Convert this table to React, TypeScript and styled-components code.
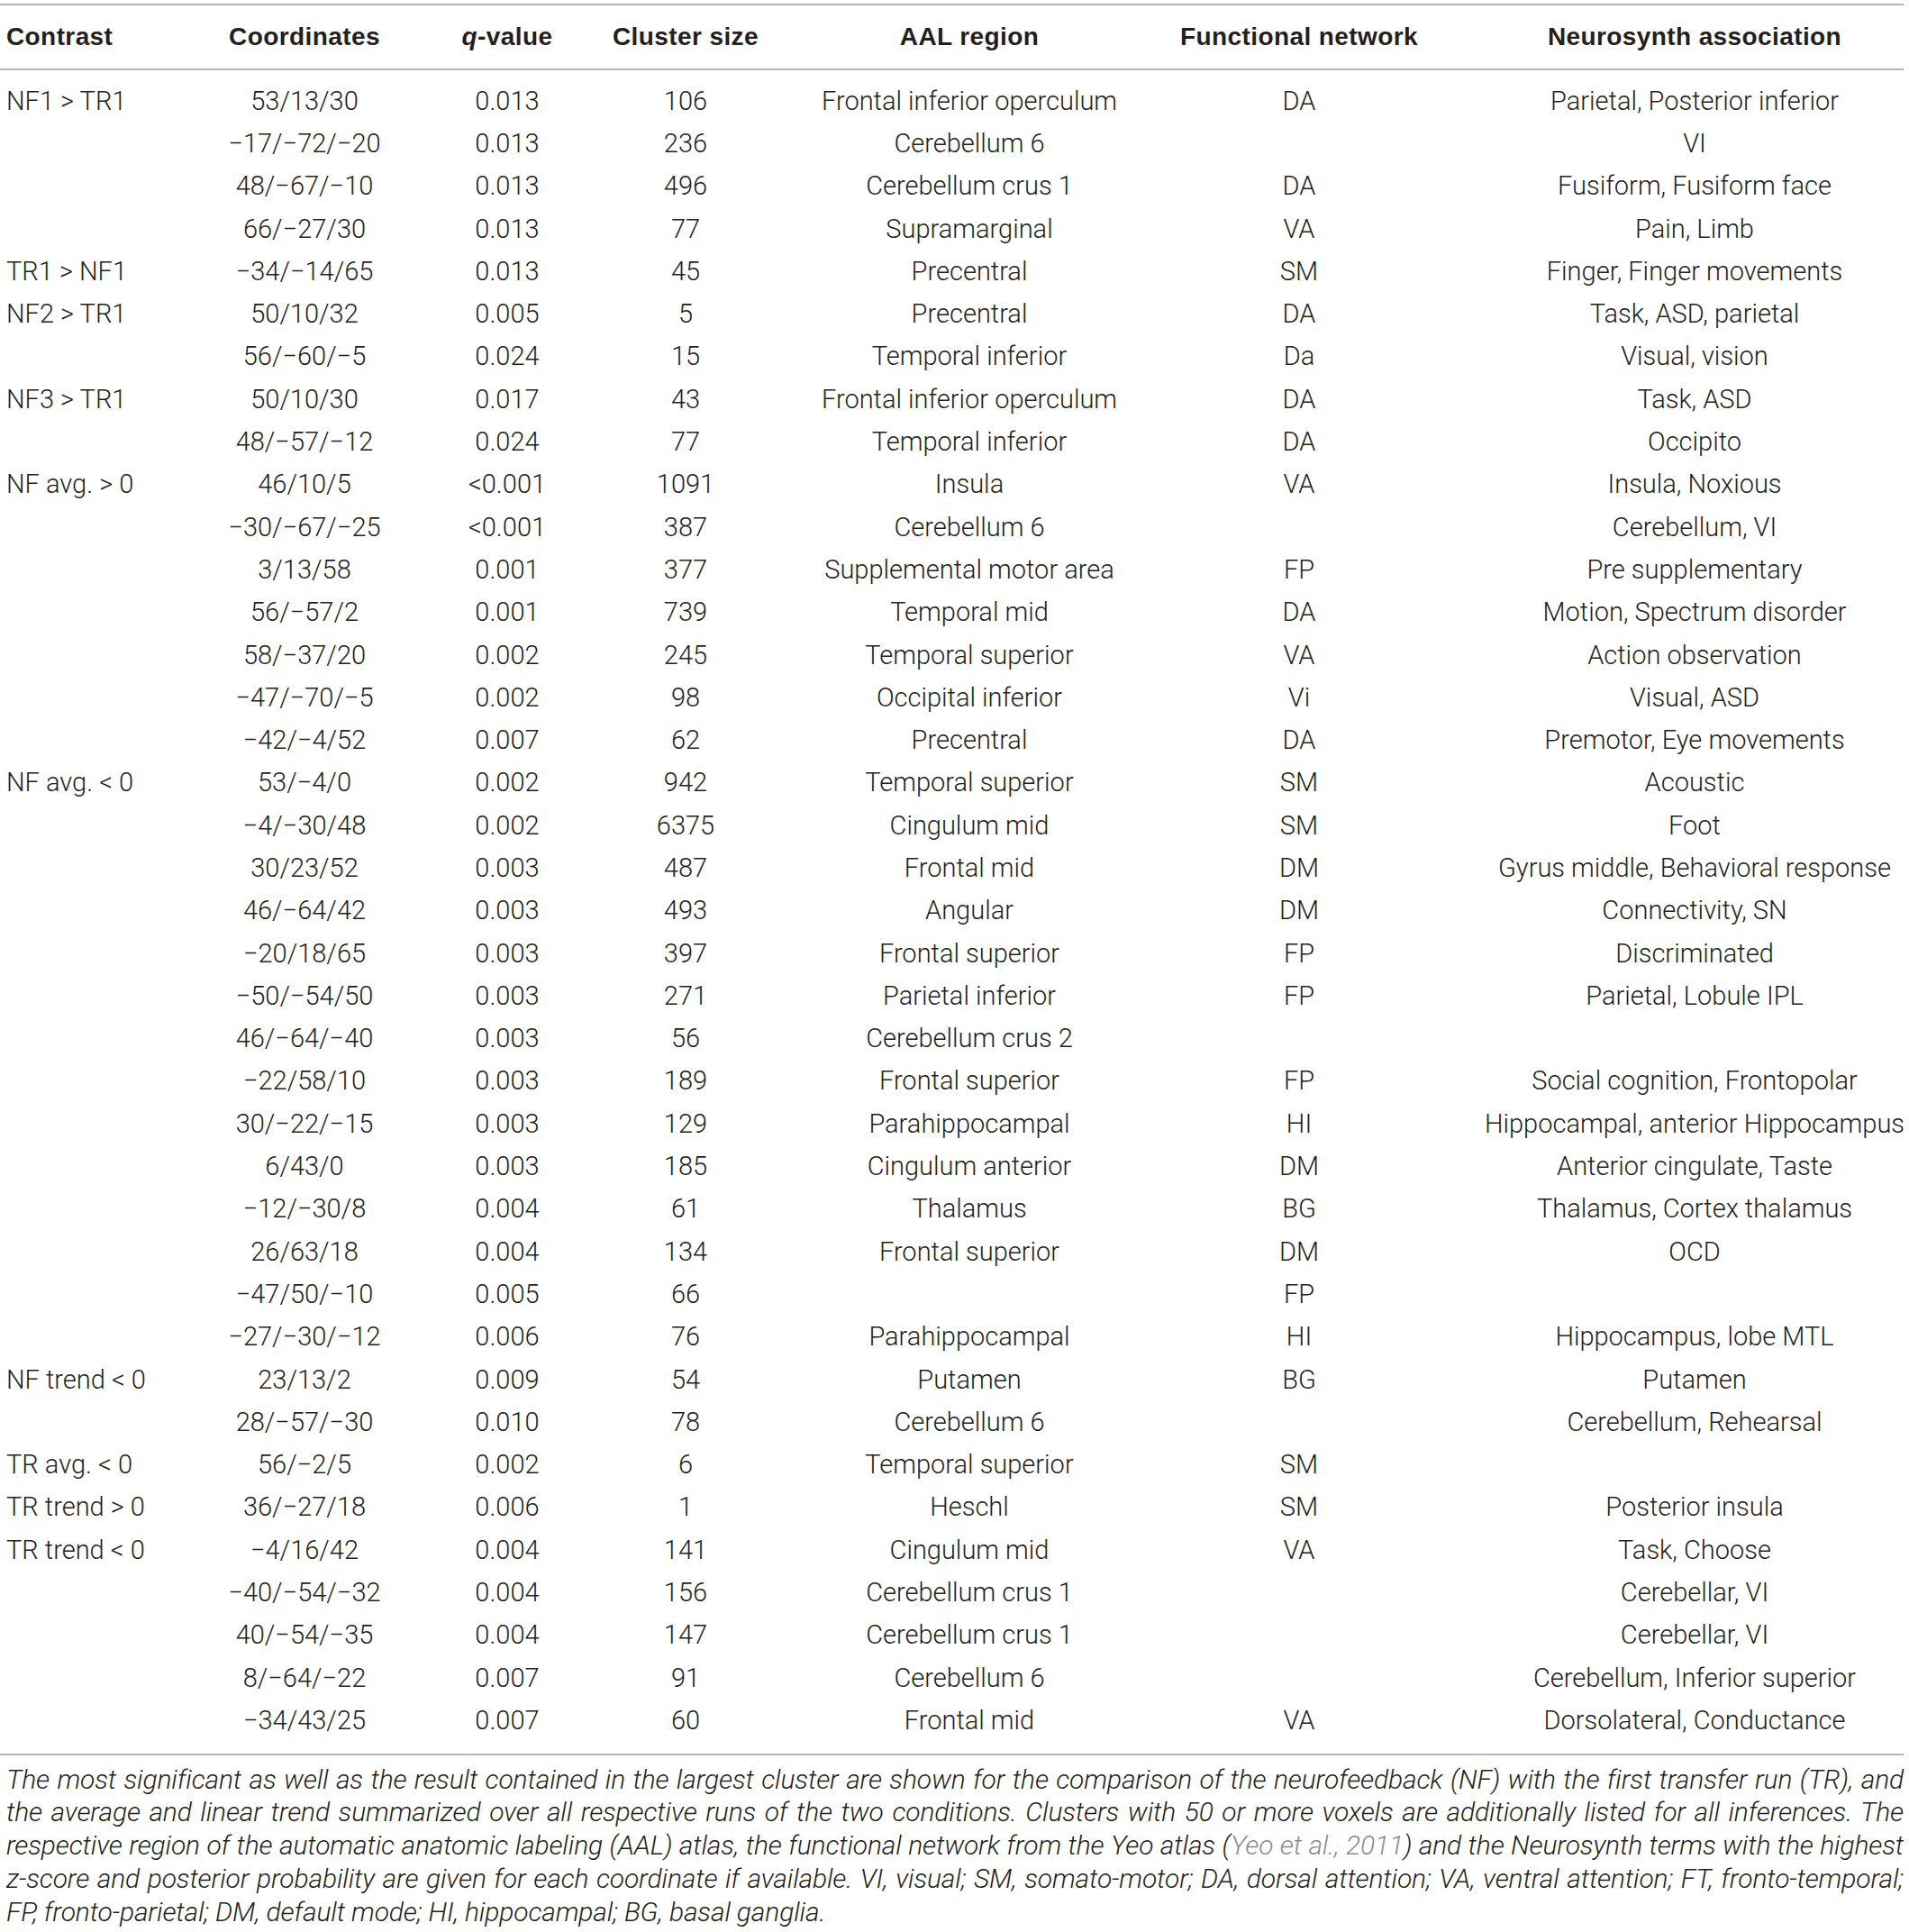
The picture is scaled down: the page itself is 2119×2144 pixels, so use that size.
import React from "react";
import styled, { createGlobalStyle } from "styled-components";

const Global = createGlobalStyle`
  html, body { margin: 0; padding: 0; background: #ffffff; }
  body { font-family: Roboto, "Liberation Sans", Arial, sans-serif; color: #231f20; }
`;

const COLS = "155px 366px 84px 312px 318px 414px 464px";

const Page = styled.div`
  width: 2113px;
  padding-top: 4px;
`;

const Table = styled.div`
  border-top: 2px solid #b4b4b4;
  border-bottom: 2px solid #b4b4b4;
`;

const HeaderRow = styled.div`
  display: grid;
  grid-template-columns: ${COLS};
  height: 70px;
  align-items: center;
  border-bottom: 2px solid #b4b4b4;
  font-family: "Liberation Sans", Arial, sans-serif;
  font-weight: 700;
  font-size: 28px;
  letter-spacing: 0.4px;
`;

const Body = styled.div`
  padding: 10px 0 13px;
`;

const Row = styled.div`
  display: grid;
  grid-template-columns: ${COLS};
  height: 47.3px;
  align-items: center;
  font-weight: 300;
  font-size: 29px;
`;

const Cell = styled.div<{ $left?: boolean }>`
  display: flex;
  justify-content: ${(p) => (p.$left ? "flex-start" : "center")};
  padding-left: ${(p) => (p.$left ? "7px" : "0")};
  white-space: nowrap;
  min-width: 0;
`;

const Q = styled.i`
  font-style: italic;
`;

const Caption = styled.div`
  margin-top: 9px;
  padding-left: 7px;
  font-style: italic;
  font-weight: 300;
  font-size: 30px;
  line-height: 36.9px;
  letter-spacing: -0.15px;
`;

const CapLine = styled.span<{ $last?: boolean }>`
  display: block;
  white-space: normal;
  text-align: ${(p) => (p.$last ? "left" : "justify")};
  text-align-last: ${(p) => (p.$last ? "left" : "justify")};
`;

const Ref = styled.span`
  color: #8c8c8c;
`;

const M = "\u2212";

type R = [string, string, string, string, string, string, string];

const rows: R[] = [
  ["NF1 > TR1", "53/13/30", "0.013", "106", "Frontal inferior operculum", "DA", "Parietal, Posterior inferior"],
  ["", `${M}17/${M}72/${M}20`, "0.013", "236", "Cerebellum 6", "", "VI"],
  ["", `48/${M}67/${M}10`, "0.013", "496", "Cerebellum crus 1", "DA", "Fusiform, Fusiform face"],
  ["", `66/${M}27/30`, "0.013", "77", "Supramarginal", "VA", "Pain, Limb"],
  ["TR1 > NF1", `${M}34/${M}14/65`, "0.013", "45", "Precentral", "SM", "Finger, Finger movements"],
  ["NF2 > TR1", "50/10/32", "0.005", "5", "Precentral", "DA", "Task, ASD, parietal"],
  ["", `56/${M}60/${M}5`, "0.024", "15", "Temporal inferior", "Da", "Visual, vision"],
  ["NF3 > TR1", "50/10/30", "0.017", "43", "Frontal inferior operculum", "DA", "Task, ASD"],
  ["", `48/${M}57/${M}12`, "0.024", "77", "Temporal inferior", "DA", "Occipito"],
  ["NF avg. > 0", "46/10/5", "<0.001", "1091", "Insula", "VA", "Insula, Noxious"],
  ["", `${M}30/${M}67/${M}25`, "<0.001", "387", "Cerebellum 6", "", "Cerebellum, VI"],
  ["", "3/13/58", "0.001", "377", "Supplemental motor area", "FP", "Pre supplementary"],
  ["", `56/${M}57/2`, "0.001", "739", "Temporal mid", "DA", "Motion, Spectrum disorder"],
  ["", `58/${M}37/20`, "0.002", "245", "Temporal superior", "VA", "Action observation"],
  ["", `${M}47/${M}70/${M}5`, "0.002", "98", "Occipital inferior", "Vi", "Visual, ASD"],
  ["", `${M}42/${M}4/52`, "0.007", "62", "Precentral", "DA", "Premotor, Eye movements"],
  ["NF avg. < 0", `53/${M}4/0`, "0.002", "942", "Temporal superior", "SM", "Acoustic"],
  ["", `${M}4/${M}30/48`, "0.002", "6375", "Cingulum mid", "SM", "Foot"],
  ["", "30/23/52", "0.003", "487", "Frontal mid", "DM", "Gyrus middle, Behavioral response"],
  ["", `46/${M}64/42`, "0.003", "493", "Angular", "DM", "Connectivity, SN"],
  ["", `${M}20/18/65`, "0.003", "397", "Frontal superior", "FP", "Discriminated"],
  ["", `${M}50/${M}54/50`, "0.003", "271", "Parietal inferior", "FP", "Parietal, Lobule IPL"],
  ["", `46/${M}64/${M}40`, "0.003", "56", "Cerebellum crus 2", "", ""],
  ["", `${M}22/58/10`, "0.003", "189", "Frontal superior", "FP", "Social cognition, Frontopolar"],
  ["", `30/${M}22/${M}15`, "0.003", "129", "Parahippocampal", "HI", "Hippocampal, anterior Hippocampus"],
  ["", "6/43/0", "0.003", "185", "Cingulum anterior", "DM", "Anterior cingulate, Taste"],
  ["", `${M}12/${M}30/8`, "0.004", "61", "Thalamus", "BG", "Thalamus, Cortex thalamus"],
  ["", "26/63/18", "0.004", "134", "Frontal superior", "DM", "OCD"],
  ["", `${M}47/50/${M}10`, "0.005", "66", "", "FP", ""],
  ["", `${M}27/${M}30/${M}12`, "0.006", "76", "Parahippocampal", "HI", "Hippocampus, lobe MTL"],
  ["NF trend < 0", "23/13/2", "0.009", "54", "Putamen", "BG", "Putamen"],
  ["", `28/${M}57/${M}30`, "0.010", "78", "Cerebellum 6", "", "Cerebellum, Rehearsal"],
  ["TR avg. < 0", `56/${M}2/5`, "0.002", "6", "Temporal superior", "SM", ""],
  ["TR trend > 0", `36/${M}27/18`, "0.006", "1", "Heschl", "SM", "Posterior insula"],
  ["TR trend < 0", `${M}4/16/42`, "0.004", "141", "Cingulum mid", "VA", "Task, Choose"],
  ["", `${M}40/${M}54/${M}32`, "0.004", "156", "Cerebellum crus 1", "", "Cerebellar, VI"],
  ["", `40/${M}54/${M}35`, "0.004", "147", "Cerebellum crus 1", "", "Cerebellar, VI"],
  ["", `8/${M}64/${M}22`, "0.007", "91", "Cerebellum 6", "", "Cerebellum, Inferior superior"],
  ["", `${M}34/43/25`, "0.007", "60", "Frontal mid", "VA", "Dorsolateral, Conductance"],
];

export default function App() {
  return (
    <>
      <Global />
      <Page>
        <Table>
          <HeaderRow>
            <Cell $left>Contrast</Cell>
            <Cell>Coordinates</Cell>
            <Cell>
              <Q>q</Q>-value
            </Cell>
            <Cell>Cluster size</Cell>
            <Cell>AAL region</Cell>
            <Cell>Functional network</Cell>
            <Cell>Neurosynth association</Cell>
          </HeaderRow>
          <Body>
            {rows.map((r, i) => (
              <Row key={i}>
                <Cell $left>{r[0]}</Cell>
                <Cell>{r[1]}</Cell>
                <Cell>{r[2]}</Cell>
                <Cell>{r[3]}</Cell>
                <Cell>{r[4]}</Cell>
                <Cell>{r[5]}</Cell>
                <Cell>{r[6]}</Cell>
              </Row>
            ))}
          </Body>
        </Table>
        <Caption>
          <CapLine>
            The most significant as well as the result contained in the largest cluster are shown for the
            comparison of the neurofeedback (NF) with the first transfer run (TR), and
          </CapLine>
          <CapLine>
            the average and linear trend summarized over all respective runs of the two conditions. Clusters
            with 50 or more voxels are additionally listed for all inferences. The
          </CapLine>
          <CapLine>
            respective region of the automatic anatomic labeling (AAL) atlas, the functional network from the
            Yeo atlas (<Ref>Yeo et al., 2011</Ref>) and the Neurosynth terms with the highest
          </CapLine>
          <CapLine>
            z-score and posterior probability are given for each coordinate if available. VI, visual; SM,
            somato-motor; DA, dorsal attention; VA, ventral attention; FT, fronto-temporal;
          </CapLine>
          <CapLine $last>FP, fronto-parietal; DM, default mode; HI, hippocampal; BG, basal ganglia.</CapLine>
        </Caption>
      </Page>
    </>
  );
}
